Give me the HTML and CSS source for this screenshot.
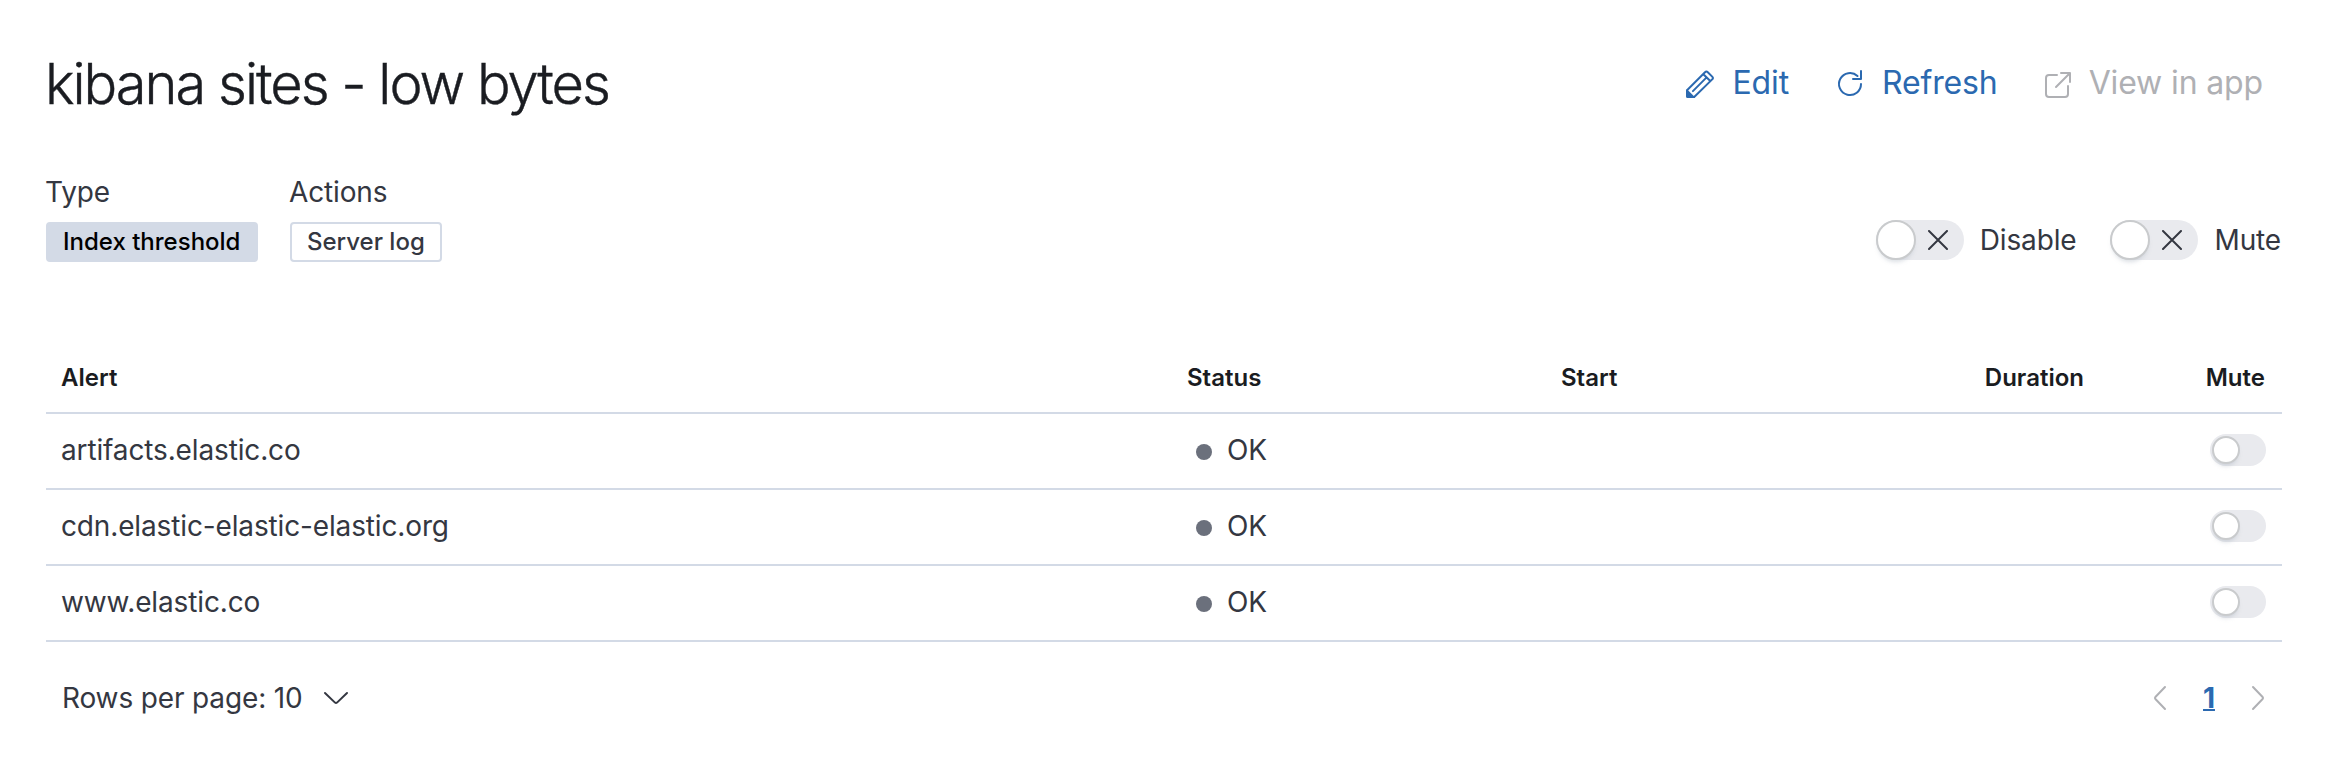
FILE: index.html
```html
<!DOCTYPE html>
<html lang="en">
<head>
<meta charset="utf-8">
<title>kibana sites - low bytes</title>
<link rel="stylesheet" href="styles.css">
</head>
<body>
<svg class="sprite" aria-hidden="true">
  <symbol id="cross" viewBox="0 0 20 20"><path d="M1 1l18 18M19 1L1 19"/></symbol>
</svg>
<main class="page">
  <header class="header">
    <h1 class="title">kibana sites - low bytes</h1>
    <nav class="actions">
      <a class="action edit"><svg class="icon" viewBox="0 0 32 32"><path d="M3 22.2L21 4.2q1.4-1.4 2.8 0l4.4 4.4q1.4 1.4 0 2.8L10.2 29M8.9 23.1L22.6 9.4M19.4 6.2l6.6 6.6"/><path class="solid" d="M3 21.2L11 29.2 10.4 30H3.6Q2 30 2 28.4V22.4z"/></svg><span>Edit</span></a>
      <a class="action refresh"><svg class="icon" viewBox="0 0 32 32"><path d="M27 16A11 11 0 1 1 23.5 8M27 3v8H19"/></svg><span>Refresh</span></a>
      <a class="action disabled"><svg class="icon" viewBox="0 0 32 32"><path d="M16 7H8a3 3 0 0 0-3 3v16a3 3 0 0 0 3 3h16a3 3 0 0 0 3-3V18M20 5h9v9M29 5L15 19"/></svg><span>View in app</span></a>
    </nav>
  </header>
  <section class="summary">
    <div class="facts">
      <div class="fact"><span class="label">Type</span><span class="badge filled">Index threshold</span></div>
      <div class="fact"><span class="label">Actions</span><span class="badge">Server log</span></div>
    </div>
    <div class="switches">
      <label class="switch-row"><span class="switch"><span class="thumb"></span><svg class="cross"><use href="#cross"/></svg></span>Disable</label>
      <label class="switch-row"><span class="switch"><span class="thumb"></span><svg class="cross"><use href="#cross"/></svg></span>Mute</label>
    </div>
  </section>
  <div class="table">
    <div class="row head"><span>Alert</span><span>Status</span><span>Start</span><span class="right duration">Duration</span><span class="right">Mute</span></div>
    <div class="row"><span>artifacts.elastic.co</span><span class="health"><i class="dot"></i>OK</span><span></span><span></span><span class="switch small"><span class="thumb"></span></span></div>
    <div class="row"><span>cdn.elastic-elastic-elastic.org</span><span class="health"><i class="dot"></i>OK</span><span></span><span></span><span class="switch small"><span class="thumb"></span></span></div>
    <div class="row"><span>www.elastic.co</span><span class="health"><i class="dot"></i>OK</span><span></span><span></span><span class="switch small"><span class="thumb"></span></span></div>
  </div>
  <footer class="footer">
    <div class="per-page"><span>Rows per page: 10</span><svg class="icon" viewBox="0 0 32 32"><path d="M5 11l10 9.6q1 .9 2 0L27 11"/></svg></div>
    <nav class="pager">
      <svg class="icon" viewBox="0 0 32 32"><path d="M21 5l-9.6 10q-.9 1 0 2L21 27"/></svg>
      <a class="current">1</a>
      <svg class="icon" viewBox="0 0 32 32"><path d="M11 5l9.6 10q.9 1 0 2L11 27"/></svg>
    </nav>
  </footer>
</main>
</body>
</html>
```
FILE: styles.css
```css
* { box-sizing: border-box; }
body {
  margin: 0;
  background: #fff;
  color: #343741;
  font: 400 28px/40px Inter, "Liberation Sans", sans-serif;
  letter-spacing: -0.005em;
}
.sprite { position: absolute; width: 0; height: 0; }
.page { width: 2328px; height: 770px; padding: 52px 46px 0; }
svg { fill: none; stroke: currentColor; stroke-width: 2; stroke-linecap: round; stroke-linejoin: round; flex: none; }
.icon { width: 32px; height: 32px; }
.solid { fill: currentColor; stroke: none; }

.header { display: flex; justify-content: space-between; height: 64px; }
.title { margin: 0 0 0 -1px; font-size: 56px; line-height: 64px; font-weight: 300; letter-spacing: -0.036em; color: #1a1c21; white-space: nowrap; -webkit-text-stroke: 0.4px #1a1c21; }
.actions { display: flex; height: 64px; padding-right: 3px; }
.action { display: flex; align-items: center; gap: 16px; padding: 0 16px; font-size: 32px; color: #2b69b0; }
.action span { padding-bottom: 2px; }
.action.edit { margin-right: 13px; }
.action.refresh { margin-right: 11px; }
.action.disabled { color: #afb0b4; }

.summary { display: flex; justify-content: space-between; align-items: flex-end; margin-top: 56px; height: 90px; }
.facts { display: flex; gap: 32px; }
.fact { display: flex; flex-direction: column; gap: 10px; align-items: flex-start; }
.label { margin-left: -1px; }
.badge { display: block; height: 40px; padding: 0 15px; border: 2px solid #d3dae6; border-radius: 4px; font-size: 24px; line-height: 36px; font-weight: 500; letter-spacing: 0; }
.badge.filled { width: 212px; background: #d3dae6; color: #000; }

.switches { display: flex; gap: 34px; padding: 0 1px 2px 0; }
.switch-row { display: flex; gap: 16px; align-items: center; }
.switch { display: flex; align-items: center; width: 88px; height: 40px; border-radius: 20px; background: #e9eaee; }
.thumb { width: 40px; height: 40px; border: 2px solid #c9cbcd; border-radius: 50%; background: #fff; box-shadow: 0 4px 4px -2px rgba(152, 162, 179, .35); }
.cross { width: 20px; height: 20px; margin-left: 12px; }
.switch.small { width: 56px; height: 32px; padding: 2px; border-radius: 16px; justify-self: end; }
.switch.small .thumb { width: 28px; height: 28px; }

.table { margin-top: 80px; }
.row { display: grid; grid-template-columns: 1127px 373px 1fr 200px 182px; align-items: center; height: 76px; padding: 0 16px 2px 15px; border-bottom: 2px solid #d3dae6; }
.row.head { height: 72px; padding: 1px 17px 0 15px; grid-template-columns: 1126px 374px 1fr 200px 181px; font-size: 24px; font-weight: 600; color: #1a1c21; letter-spacing: 0; }
.right { text-align: right; }
.health { display: flex; align-items: center; gap: 15px; padding-left: 8px; }
.dot { width: 16px; height: 16px; margin-top: 4px; border-radius: 50%; background: #6b707c; }

.footer { display: flex; justify-content: space-between; align-items: center; height: 40px; margin-top: 36px; padding: 0 8px 0 16px; }
.per-page { display: flex; align-items: center; gap: 17px; }
.pager { display: flex; align-items: center; color: #afb0b4; }
.current { width: 66px; text-align: center; font-weight: 700; color: #2b69b0; text-decoration: underline; text-decoration-thickness: 2px; }
```
